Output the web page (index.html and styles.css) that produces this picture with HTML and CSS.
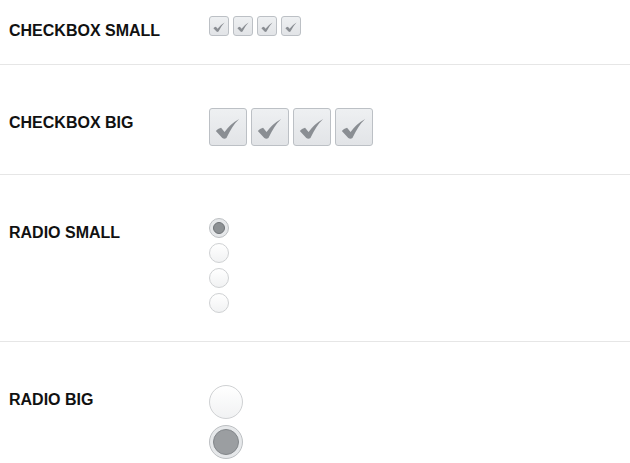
FILE: index.html
```html
<!DOCTYPE html>
<html>
<head>
<meta charset="utf-8">
<link rel="stylesheet" href="styles.css">
</head>
<body>
<div class="page">
  <section class="row row-first">
    <div class="label">CHECKBOX SMALL</div>
    <div class="controls horiz">
      <span class="cb cb-sm"><svg viewBox="0 0 24 20"><path d="M0.8 12.3 Q2.5 10 5.8 9.3 L9.2 13.4 Q14 6 23.2 0.8 Q16.5 7 11 19.2 Q9 20.3 7 19.2 Z"/></svg></span>
      <span class="cb cb-sm"><svg viewBox="0 0 24 20"><path d="M0.8 12.3 Q2.5 10 5.8 9.3 L9.2 13.4 Q14 6 23.2 0.8 Q16.5 7 11 19.2 Q9 20.3 7 19.2 Z"/></svg></span>
      <span class="cb cb-sm"><svg viewBox="0 0 24 20"><path d="M0.8 12.3 Q2.5 10 5.8 9.3 L9.2 13.4 Q14 6 23.2 0.8 Q16.5 7 11 19.2 Q9 20.3 7 19.2 Z"/></svg></span>
      <span class="cb cb-sm"><svg viewBox="0 0 24 20"><path d="M0.8 12.3 Q2.5 10 5.8 9.3 L9.2 13.4 Q14 6 23.2 0.8 Q16.5 7 11 19.2 Q9 20.3 7 19.2 Z"/></svg></span>
    </div>
  </section>
  <section class="row">
    <div class="label">CHECKBOX BIG</div>
    <div class="controls horiz">
      <span class="cb cb-lg"><svg viewBox="0 0 24 20"><path d="M0.8 12.3 Q2.5 10 5.8 9.3 L9.2 13.4 Q14 6 23.2 0.8 Q16.5 7 11 19.2 Q9 20.3 7 19.2 Z"/></svg></span>
      <span class="cb cb-lg"><svg viewBox="0 0 24 20"><path d="M0.8 12.3 Q2.5 10 5.8 9.3 L9.2 13.4 Q14 6 23.2 0.8 Q16.5 7 11 19.2 Q9 20.3 7 19.2 Z"/></svg></span>
      <span class="cb cb-lg"><svg viewBox="0 0 24 20"><path d="M0.8 12.3 Q2.5 10 5.8 9.3 L9.2 13.4 Q14 6 23.2 0.8 Q16.5 7 11 19.2 Q9 20.3 7 19.2 Z"/></svg></span>
      <span class="cb cb-lg"><svg viewBox="0 0 24 20"><path d="M0.8 12.3 Q2.5 10 5.8 9.3 L9.2 13.4 Q14 6 23.2 0.8 Q16.5 7 11 19.2 Q9 20.3 7 19.2 Z"/></svg></span>
    </div>
  </section>
  <section class="row">
    <div class="label">RADIO SMALL</div>
    <div class="controls vert vert-sm">
      <span class="rd rd-sm checked"></span>
      <span class="rd rd-sm"></span>
      <span class="rd rd-sm"></span>
      <span class="rd rd-sm"></span>
    </div>
  </section>
  <section class="row">
    <div class="label">RADIO BIG</div>
    <div class="controls vert vert-lg">
      <span class="rd rd-lg"></span>
      <span class="rd rd-lg checked"></span>
    </div>
  </section>
</div>
</body>
</html>
```

FILE: styles.css
```css
html, body {
  margin: 0;
  padding: 0;
  background: #ffffff;
}
body {
  font-family: "Liberation Sans", Arial, sans-serif;
  overflow: hidden;
}
.page {
  width: 630px;
}
.row {
  display: flex;
  align-items: flex-start;
  padding: 43px 0 28px 0;
  border-bottom: 1px solid #e6e6e6;
}
.row-first {
  padding-top: 16px;
  padding-bottom: 24px;
}
.label {
  width: 200px;
  padding-left: 9px;
  margin-top: 6px;
  font-weight: bold;
  font-size: 16px;
  line-height: 18px;
  color: #111;
}
.controls {
  display: flex;
}
.horiz {
  gap: 4px;
}
.vert {
  flex-direction: column;
}
.vert-sm { gap: 5px; }
.vert-lg { gap: 6px; }

.cb {
  box-sizing: border-box;
  display: flex;
  align-items: center;
  justify-content: center;
  border: 1px solid #bcc0c5;
  border-radius: 3px;
  background: linear-gradient(#eef0f2, #e2e4e7);
}
.cb svg path { fill: #8a8e93; }
.cb-sm {
  width: 20px;
  height: 20px;
}
.cb-sm svg {
  width: 12px;
  height: 10px;
  margin: 2px 0 0 0;
}
.cb-lg {
  width: 38px;
  height: 38px;
}
.cb-lg svg {
  width: 25px;
  height: 21px;
  margin: 3px 1px 0 0;
}

.rd {
  box-sizing: border-box;
  display: flex;
  align-items: center;
  justify-content: center;
  border-radius: 50%;
  border: 1px solid #cfd1d3;
  background: linear-gradient(#ffffff, #f1f2f3);
}
.rd-sm { width: 20px; height: 20px; }
.rd-lg { width: 34px; height: 34px; }
.rd.checked {
  background: #e6e8ea;
  border-color: #bdc0c3;
}
.rd.checked::after {
  content: "";
  box-sizing: border-box;
  border-radius: 50%;
  background: #8d9194;
  border: 1px solid #6f7377;
}
.rd-sm.checked::after { width: 12px; height: 12px; }
.rd-lg.checked::after { width: 26px; height: 26px; background: #9b9ea1; border-color: #82868a; }
```
